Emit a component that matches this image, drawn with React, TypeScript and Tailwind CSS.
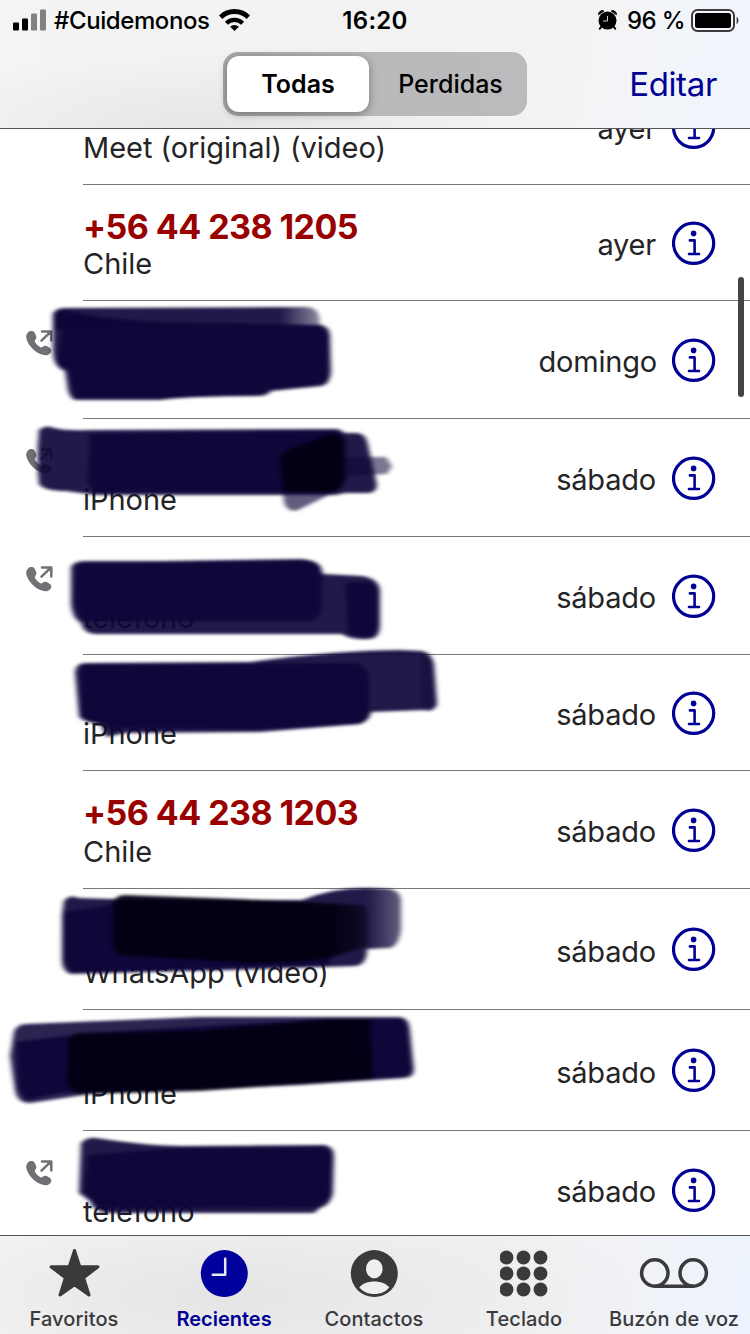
import React from 'react';
import clsx from 'clsx';

interface Call {
  id: number;
  name?: string;
  label?: string;
  day: string;
  dayClass?: string;
  outgoing?: boolean;
  height: string;
}

const calls: Call[] = [
  { id: 1, label: 'Meet (original) (video)', day: 'ayer', height: '-mt-[60px] h-[116px]' },
  { id: 2, name: '+56 44 238 1205', label: 'Chile', day: 'ayer', height: 'h-[116px]' },
  { id: 3, day: 'domingo', dayClass: '-mr-px', outgoing: true, height: 'h-[118px]' },
  { id: 4, label: 'iPhone', day: 'sábado', outgoing: true, height: 'h-[118px]' },
  { id: 5, label: 'teléfono', day: 'sábado', outgoing: true, height: 'h-[118px]' },
  { id: 6, label: 'iPhone', day: 'sábado', height: 'h-[116px]' },
  { id: 7, name: '+56 44 238 1203', label: 'Chile', day: 'sábado', height: 'h-[118px]' },
  { id: 8, label: 'WhatsApp (video)', day: 'sábado', height: 'h-[121px]' },
  { id: 9, label: 'iPhone', day: 'sábado', height: 'h-[121px]' },
  { id: 10, label: 'teléfono', day: 'sábado', outgoing: true, height: 'h-[118px]' },
];

function SignalIcon() {
  return (
    <svg width="34" height="22" viewBox="0 0 34 22">
      <rect x="0" y="13.5" width="6" height="8" rx="1" />
      <rect x="9" y="9.5" width="6" height="12" rx="1" />
      <rect x="18" y="4.5" width="6" height="17" rx="1" fill="#818181" />
      <rect x="27" y="0.5" width="6" height="21" rx="1" fill="#818181" />
    </svg>
  );
}

function WifiIcon() {
  return (
    <svg width="31" height="22" viewBox="0 0 31 22" fill="none" stroke="#000" strokeWidth="4.8">
      <path d="M1.7 8.2a19.600 19.600 0 0 1 27.600 0" />
      <path d="M7.400 14.300a11.500 11.500 0 0 1 16.200 0" strokeWidth="4.200" />
      <path d="M15.500 22l-4.300-4.200a6.200 6.200 0 0 1 8.600 0z" fill="#000" stroke="none" />
    </svg>
  );
}

function AlarmIcon() {
  return (
    <svg width="19" height="20" viewBox="0 0 19 20">
      <circle cx="9.5" cy="10.6" r="9" />
      <path d="M0.5 4.800A3.800 3.800 0 0 1 6 1zM18.500 4.800A3.800 3.800 0 0 0 13 1z" stroke="#000" strokeWidth="0.800" />
      <path d="M3.2 16.800l-1.400 2M15.800 16.800l1.400 2" stroke="#000" strokeWidth="2" strokeLinecap="round" />
      <path d="M9.5 6v5H5" fill="none" stroke="#d0d0d0" strokeWidth="1" />
    </svg>
  );
}

function BatteryIcon() {
  return (
    <svg width="49" height="23" viewBox="0 0 49 23">
      <rect x="1" y="1" width="42" height="21" rx="5.5" fill="none" stroke="#3c3c3e" strokeWidth="2" />
      <rect x="4" y="4" width="36" height="15" rx="2.5" />
      <path d="M45.6 7.8c2.4 1 2.4 6.4 0 7.4z" fill="#3c3c3e" />
    </svg>
  );
}

function OutgoingIcon() {
  return (
    <svg width="27" height="27" viewBox="0 0 27 27" fill="#717175">
      <path d="M2 2.500C3.700.7 7 .6 8.500 2.500l1.300 2.700c.9 1.800.7 3.300-.4 4.500-.8.900-.8 1.700-.1 2.800 1.200 1.800 2.700 3.300 4.600 4.500 1 .600 1.900.600 2.800-.2 1.300-1.100 2.900-1.300 4.400-.5l2.500 1.500c2 1.300 2.200 3.600.8 5.200-1.900 2.300-4.700 2.800-7.800 1.800C9.200 22.500 2.600 15.900.600 9.200-.2 6.500.300 4.300 2 2.500z" />
      <path d="M15.500 10.600L24.500 1.800M16 1.400h9.300v9" fill="none" stroke="#717175" strokeWidth="2.500" strokeLinecap="round" strokeLinejoin="round" />
    </svg>
  );
}

function InfoIcon() {
  return (
    <svg className="shrink-0" width="44" height="44" viewBox="0 0 44 44" fill="none" stroke="#000094">
      <circle cx="21.6" cy="22.3" r="20.1" strokeWidth="3.2" />
      <circle cx="21.6" cy="12.4" r="2.8" fill="#000094" stroke="none" />
      <path d="M17.9 19.4h4.700v13.300M17 33h10" strokeWidth="2.600" strokeLinecap="round" strokeLinejoin="round" />
    </svg>
  );
}

function CallRow({ call }: { call: Call }) {
  return (
    <div className={clsx('flex shrink-0', call.height)}>
      <div className="w-[83px] pl-[26px] pt-[29px]">{call.outgoing && <OutgoingIcon />}</div>
      <div className="flex flex-1 border-b border-[#77777a] pr-[34px]">
        <div className="flex flex-1 flex-col justify-between pb-[18px] pt-[24px]">
          <div className="h-[36px] text-[34px] font-bold leading-[36px] tracking-[-0.55px] text-[#990000]">{call.name}</div>
          <div className="text-[29px] leading-[36px] tracking-[-0.04px] text-[#242426]">{call.label}</div>
        </div>
        <div className="flex items-center gap-[16px]">
          <span className={clsx('pt-[5px] text-[29px] leading-[36px] tracking-[-0.2px] text-[#242426]', call.dayClass)}>{call.day}</span>
          <InfoIcon />
        </div>
      </div>
    </div>
  );
}

// Marker strokes drawn over the contact names
function MarkerStrokes() {
  return (
    <svg className="pointer-events-none absolute inset-0" width="750" height="1106" viewBox="0 129 750 1106">
      <defs>
        <filter id="soft" x="-5%" y="-10%" width="110%" height="120%" colorInterpolationFilters="sRGB">
          <feGaussianBlur stdDeviation="2.4 1.4" />
        </filter>
        <linearGradient id="fade" x1="0" x2="1">
          <stop offset="0.85" stopColor="#0e0538" />
          <stop offset="1" stopColor="#0e0538" stopOpacity="0.5" />
        </linearGradient>
        <linearGradient id="fadeEnd" x1="0" x2="1">
          <stop offset="0.9" stopColor="#0e0538" />
          <stop offset="1" stopColor="#0e0538" stopOpacity="0.7" />
        </linearGradient>
        <linearGradient id="darkEnd" x1="0" x2="1">
          <stop offset="0.88" stopColor="#020012" />
          <stop offset="1" stopColor="#020012" stopOpacity="0.6" />
        </linearGradient>
      </defs>
      <g fill="#0e0538" fillOpacity="0.92" filter="url(#soft)">
        {/* domingo */}
        <path d="M53 314Q56 308 64 308L308 307Q317 308 319 316L321 330H53Z" fill="url(#fade)" />
        <path d="M53 314Q56 309 64 310Q120 324 210 323L322 325Q329 327 330 335L331 372Q330 384 322 386L271 391Q268 396 258 396Q190 396 160 400L75 400Q68 397 67 384L65 371Q53 367 53 350Z" />
        <path d="M65 314Q120 324 210 323L322 327L328 335V378L320 384L268 390L258 395L160 398H75L69 370L57 364Z" />
        {/* sábado, iPhone */}
        <path d="M39 430Q46 424 54 428Q66 431 90 430L338 429L345 433L358 433Q366 434 368 445L377 485Q376 493 368 493L345 493L335 495L95 495L66 491Q44 491 39 484Q36 460 39 430Z" />
        <path d="M90 434L338 431L346 440V482L336 492L96 492L88 483Z" />
        <path d="M342 457L386 457L392 466L387 474L342 476Z" fillOpacity="0.55" />
        <path d="M280 462Q278 455 288 450L330 434Q345 434 345 445V478Q344 488 333 493L298 510Q287 513 284 502Z" fillOpacity="0.65" />
        <path d="M280 460Q280 454 290 449L330 434Q344 434 344 445V478Q342 489 333 492H284Z" fill="#020012" />
        {/* sábado, teléfono */}
        <path d="M71 567Q74 561 84 561L160 561L300 559Q318 560 321 568L323 574L362 576Q378 578 380 590L380 625Q380 639 368 639Q350 640 342 634L95 634Q84 634 81 623Q72 618 71 604Z" />
        <path d="M76 564L310 561Q322 564 322 576L321 610Q320 620 308 621L84 621Q76 614 74 600Z" />
        <path d="M346 583Q377 580 378 590V626Q376 637 366 637L348 634Z" />
        {/* sábado, second iPhone */}
        <path d="M75 672Q76 663 86 663L250 662Q340 650 400 650L422 651Q432 653 434 664L437 704Q434 713 424 710L371 712Q370 720 360 724L260 732L125 733L106 737L101 724Q82 722 79 716Z" />
        <path d="M80 665L355 663Q369 666 369 680V714Q368 722 358 724L260 729L110 728L82 718Z" />
        <path d="M421 655Q432 656 433 668L435 706L421 707Z" fillOpacity="0.4" />
        {/* sábado, WhatsApp */}
        <path d="M64 901Q70 894 78 898L112 899L280 900L302 900Q335 887 370 888L390 889Q400 891 401 900V930Q398 948 388 948L367 949Q367 964 356 966L230 970L70 974Q62 970 62 960L62 915Z" fill="url(#fadeEnd)" />
        <path d="M64 912L118 904V952L330 955L330 965L72 972L63 960Z" />
        <path d="M113 903Q116 894 126 895L240 899L362 905Q368 908 367 920L367 946L330 958Q300 963 250 963L120 955Q112 952 113 940Z" fill="url(#darkEnd)" />
        <path d="M116 900L240 902L334 906V956L250 961L120 953Z" fill="#020012" />
        {/* sábado, third iPhone */}
        <path d="M14 1032Q17 1024 26 1024L200 1017L400 1017Q409 1018 410 1030L414 1070Q413 1078 404 1078L300 1085L90 1094L30 1103Q17 1103 15 1090L10 1056Z" fillOpacity="0.88" />
        <path d="M16 1042L90 1033L330 1019L404 1019Q408 1024 408 1034L412 1068Q410 1076 402 1077L60 1093L26 1100L18 1088Z" />
        <path d="M68 1040Q71 1033 80 1033L200 1031L330 1019L370 1019L373 1079L200 1091L80 1094Q68 1092 67 1078Z" fill="#020012" />
        {/* sábado, second teléfono */}
        <path d="M81 1143Q87 1137 96 1138Q140 1145 180 1146L325 1145Q334 1147 334 1156L333 1193Q331 1205 320 1208L314 1213L106 1213Q92 1210 90 1201L79 1193Z" />
        <path d="M88 1155L180 1148L322 1147Q331 1150 331 1158L330 1193Q328 1204 316 1207L100 1208L84 1192Z" />
      </g>
    </svg>
  );
}

function TabItem({ label, active, children }: { label: string; active?: boolean; children: React.ReactNode }) {
  return (
    <div className="flex w-[150px] shrink-0 flex-col items-center pt-[13px]">
      <div className="flex h-[50px] items-center justify-center">{children}</div>
      <span
        className={clsx(
          'mt-[8px] whitespace-nowrap text-[20px] leading-[24px]',
          active ? 'font-semibold text-[#000094]' : 'font-medium tracking-[0.1px] text-[#3a3a3c]',
        )}
      >
        {label}
      </span>
    </div>
  );
}

export default function App() {
  return (
    <div className="flex h-[1334px] w-[750px] flex-col overflow-hidden bg-white font-['Inter',sans-serif]">
      <header className="h-[129px] shrink-0 border-b border-[#555557] bg-[radial-gradient(ellipse_300px_80px_at_210px_129px,#e6e6e6,transparent),linear-gradient(100deg,#f4f4f5_0%,#f2f2f2_60%,#f3f4f6_80%,#f0f5fd_100%)]">
        <div className="flex h-[40px] items-center">
          <div className="flex flex-1 items-center pl-[13px]">
            <SignalIcon />
            <span className="ml-[7px] pt-[2px] text-[24px] font-medium leading-[38px] tracking-[-0.4px]">#Cuidemonos</span>
            <span className="ml-[9px]">
              <WifiIcon />
            </span>
          </div>
          <span className="-ml-[3px] pt-[2px] text-[24px] font-semibold leading-[38px] tracking-[0.3px]">16:20</span>
          <div className="flex flex-1 items-center justify-end pr-[10px]">
            <AlarmIcon />
            <span className="ml-[10px] mr-[6px] pt-[2px] text-[24px] font-medium leading-[38px] tracking-[-0.6px]">96 %</span>
            <BatteryIcon />
          </div>
        </div>
        <div className="flex items-center pl-[223px] pt-[12px]">
          <div className="flex h-[64px] w-[304px] items-center rounded-[15px] bg-gradient-to-r from-[#a9a9ab] via-[#b9b9bb] to-[#bbbbbd] p-[4px]">
            <div className="h-[56px] w-[142px] rounded-[12px] bg-white text-center text-[25px] font-semibold leading-[57px] shadow-[0_2px_8px_rgba(0,0,0,0.35)]">Todas</div>
            <div className="flex-1 pl-[9px] text-center text-[25px] font-medium leading-[57px]">Perdidas</div>
          </div>
          <span className="ml-auto pr-[33px] text-[33px] leading-[40px] tracking-[-0.35px] text-[#000094]">Editar</span>
        </div>
      </header>

      <main className="relative flex h-[1106px] shrink-0 flex-col overflow-hidden bg-white">
        {calls.map((call) => (
          <CallRow key={call.id} call={call} />
        ))}
        <MarkerStrokes />
        <div className="absolute right-[6px] top-[148px] h-[120px] w-[6px] rounded-full bg-[#444446]" />
      </main>

      <nav className="-ml-px flex h-[99px] w-[752px] shrink-0 border-t border-[#555557] bg-[radial-gradient(ellipse_420px_110px_at_230px_60px,#e5e5e5,transparent),linear-gradient(100deg,#f6f6f6_0%,#f2f2f2_60%,#f1f2f5_80%,#edf3fd_100%)]">
        <TabItem label="Favoritos">
          <svg width="52" height="50" viewBox="0 0 52 50" fill="#3a3a3c" stroke="#3a3a3c" strokeWidth="3" strokeLinejoin="round">
            <path d="M26.5 1.5L31.800 17.800H50L35.600 28.800L41 46L26.500 35.800L12 46L17.400 28.800L3 17.800H21.200Z" />
          </svg>
        </TabItem>
        <TabItem label="Recientes" active>
          <svg width="48" height="48" viewBox="0 0 48 48">
            <circle cx="24.3" cy="23.6" r="23.5" fill="#00009c" />
            <path d="M25.2 8.8V24.800H12.800" fill="none" stroke="#e8e8fa" strokeWidth="2.5" strokeLinecap="round" strokeLinejoin="round" />
          </svg>
        </TabItem>
        <TabItem label="Contactos">
          <svg width="48" height="48" viewBox="0 0 48 48">
            <circle cx="24.3" cy="23.6" r="23.5" fill="#3a3a3c" />
            <ellipse cx="24.3" cy="18.8" rx="8.3" ry="9.5" fill="#efefef" />
            <path d="M9.3 37.5C12.3 33.5 18 31.5 24.3 31.5S36.3 33.5 39.3 37.5C35.3 42 30.3 44 24.3 44S13.3 42 9.3 37.5Z" fill="#efefef" />
          </svg>
        </TabItem>
        <TabItem label="Teclado">
          <svg width="48" height="48" viewBox="0 0 48 48" fill="#3a3a3c">
            {[6.5, 23.5, 40.5].map((x) => [7.5, 23.5, 39.5].map((y) => <circle key={`${x}-${y}`} cx={x} cy={y} r="6.9" />))}
          </svg>
        </TabItem>
        <TabItem label="Buzón de voz">
          <svg width="70" height="48" viewBox="0 0 70 48" fill="none" stroke="#3a3a3c" strokeWidth="3.5">
            <circle cx="15.8" cy="23" r="13.2" />
            <circle cx="54.2" cy="23" r="13.2" />
            <path d="M15.8 36.2H54.2" />
          </svg>
        </TabItem>
      </nav>
    </div>
  );
}
